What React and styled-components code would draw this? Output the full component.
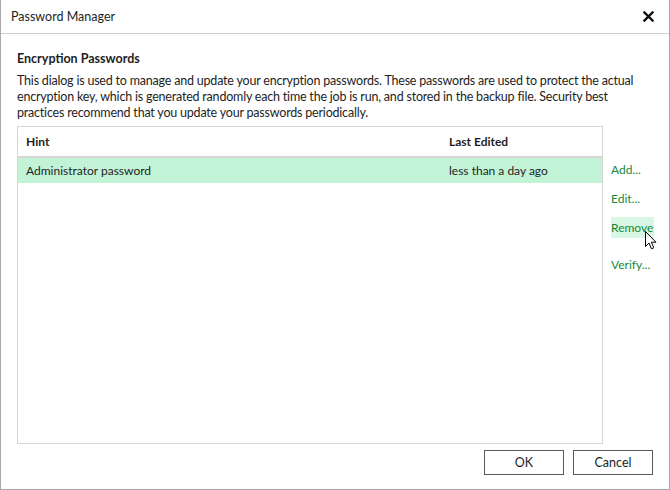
import React from 'react';
import styled, { createGlobalStyle } from 'styled-components';

const GlobalStyle = createGlobalStyle`
  html, body {
    margin: 0;
    padding: 0;
    background: #ffffff;
  }
  body {
    font-family: Lato, "Noto Sans", "Liberation Sans", sans-serif;
    font-size: 12px;
    color: #1e1e1e;
  }
`

const Window = styled.div`
  width: 670px;
  height: 490px;
  box-sizing: border-box;
  border: 1px solid #a8a8a8;
  border-top: none;
  background: #fff;
  display: flex;
  flex-direction: column;
`

const TitleBar = styled.div`
  height: 34px;
  flex-shrink: 0;
  box-sizing: border-box;
  border-bottom: 1px solid #cfcfcf;
  display: flex;
  align-items: center;
  justify-content: space-between;
  padding: 0 14px 0 10px;
`

const Title = styled.span`
  font-size: 12.5px;
  color: #1e1e1e;
`

const CloseButton = styled.button`
  border: none;
  background: none;
  padding: 0;
  width: 12px;
  height: 12px;
  display: flex;
  cursor: pointer;
`

const Body = styled.div`
  flex: 1;
  display: flex;
  flex-direction: column;
  padding: 17px 16px 14px 16px;
`

const Heading = styled.div`
  font-weight: 700;
  font-size: 12.5px;
  line-height: 16px;
  margin-bottom: 6px;
`

const Description = styled.div`
  font-size: 12.5px;
  line-height: 16px;
  margin-bottom: 5px;
  white-space: nowrap;
  letter-spacing: -0.2px;

  span {
    display: block;
  }
`

const Main = styled.div`
  display: flex;
  gap: 8px;
  height: 318px;
`

const Table = styled.div`
  width: 586px;
  flex-shrink: 0;
  box-sizing: border-box;
  border: 1px solid #d6d6d6;
  display: flex;
  flex-direction: column;
`

const HeaderRow = styled.div`
  display: grid;
  grid-template-columns: 423px 1fr;
  height: 29px;
  align-items: center;
  border-bottom: 2px solid #d6d6d6;
  font-weight: 700;
  padding-left: 8px;
`

const Row = styled.div`
  display: grid;
  grid-template-columns: 423px 1fr;
  height: 25px;
  align-items: center;
  padding-left: 8px;
  background: ${p => (p.$selected ? '#c2f3d6' : 'transparent')};
`

const Actions = styled.div`
  display: flex;
  flex-direction: column;
  align-items: flex-start;
  padding-top: 33px;
`

const ActionLink = styled.a`
  position: relative;
  display: block;
  color: #15883b;
  line-height: 21px;
  padding: 0 1px 0 0;
  margin-bottom: ${p => p.$gap}px;
  background: ${p => (p.$hover ? '#d8f7e4' : 'transparent')};
  cursor: pointer;
`

const Cursor = styled.svg`
  position: absolute;
  left: 34px;
  top: 14px;
`

const Footer = styled.div`
  margin-top: auto;
  display: flex;
  justify-content: flex-end;
  gap: 9px;
`

const Button = styled.button`
  width: 80px;
  height: 25px;
  box-sizing: border-box;
  border: 1px solid #5a5a5a;
  background: #fff;
  font-family: inherit;
  font-size: 12.5px;
  color: #1e1e1e;
  padding: 0;
`

const actions = [
  { label: 'Add...', gap: 8 },
  { label: 'Edit...', gap: 8 },
  { label: 'Remove', gap: 16, hover: true },
  { label: 'Verify...', gap: 0 },
]

const App = () => {
  return (
    <>
      <GlobalStyle />
      <Window>
        <TitleBar>
          <Title>Password Manager</Title>
          <CloseButton aria-label="Close">
            <svg width="11" height="11" viewBox="0 0 11 11">
              <path d="M1.5 1.5 L9.5 9.5 M9.5 1.5 L1.5 9.5" stroke="#111" strokeWidth="2.4" strokeLinecap="square" />
            </svg>
          </CloseButton>
        </TitleBar>
        <Body>
          <Heading>Encryption Passwords</Heading>
          <Description>
            <span>This dialog is used to manage and update your encryption passwords. These passwords are used to protect the actual</span>
            <span>encryption key, which is generated randomly each time the job is run, and stored in the backup file. Security best</span>
            <span>practices recommend that you update your passwords periodically.</span>
          </Description>
          <Main>
            <Table>
              <HeaderRow>
                <span>Hint</span>
                <span>Last Edited</span>
              </HeaderRow>
              <Row $selected>
                <span>Administrator password</span>
                <span>less than a day ago</span>
              </Row>
            </Table>
            <Actions>
              {actions.map(a => (
                <ActionLink key={a.label} $gap={a.gap} $hover={a.hover}>
                  {a.label}
                  {a.hover && (
                    <Cursor width="12" height="19" viewBox="0 0 12 19">
                      <path d="M0.5 0.5 L0.5 15.5 L4 12 L6.5 17.8 L8.8 16.8 L6.4 11.2 L11 11.2 Z" fill="#fff" stroke="#000" strokeWidth="1" strokeLinejoin="miter" />
                    </Cursor>
                  )}
                </ActionLink>
              ))}
            </Actions>
          </Main>
          <Footer>
            <Button>OK</Button>
            <Button>Cancel</Button>
          </Footer>
        </Body>
      </Window>
    </>
  );
}

export default App;
